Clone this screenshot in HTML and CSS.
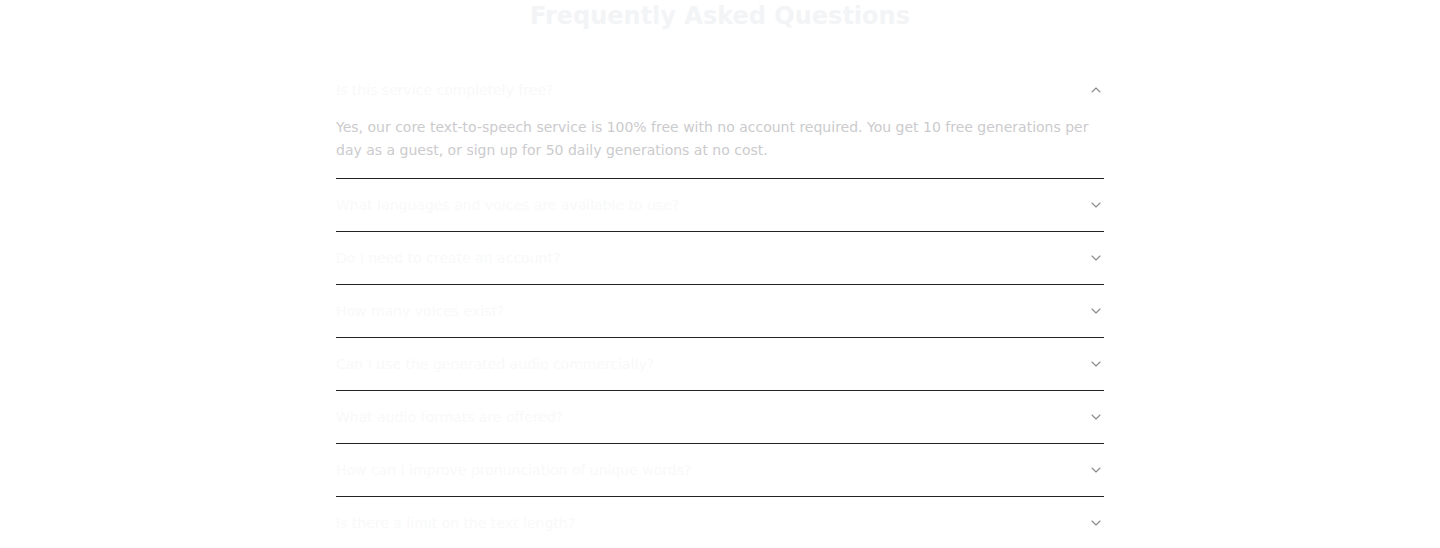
FILE: index.html
```html
<!DOCTYPE html>
<html lang="en">
<head>
  <meta charset="UTF-8" />
  <meta name="viewport" content="width=device-width, initial-scale=1.0" />
  <title>FAQ</title>
  <link rel="stylesheet" href="styles.css">
</head>
<body>

  <section class="faq">
    <h2 class="faq-title">Frequently Asked Questions</h2>

    <div class="faq-list">
      <!-- open item -->
      <div class="faq-item open">
        <button class="faq-q">
          <span>Is this service completely free?</span>
          <svg class="chev" viewBox="0 0 24 24"><path d="M6 15l6-6 6 6" /></svg>
        </button>
        <div class="faq-a">Yes, our core text-to-speech service is 100% free with no account required. You get 10 free generations per day as a guest, or sign up for 50 daily generations at no cost.</div>
      </div>

      <div class="faq-item">
        <button class="faq-q">
          <span>What languages and voices are available to use?</span>
          <svg class="chev" viewBox="0 0 24 24"><path d="M6 9l6 6 6-6" /></svg>
        </button>
      </div>

      <div class="faq-item">
        <button class="faq-q">
          <span>Do I need to create an account?</span>
          <svg class="chev" viewBox="0 0 24 24"><path d="M6 9l6 6 6-6" /></svg>
        </button>
      </div>

      <div class="faq-item">
        <button class="faq-q">
          <span>How many voices exist?</span>
          <svg class="chev" viewBox="0 0 24 24"><path d="M6 9l6 6 6-6" /></svg>
        </button>
      </div>

      <div class="faq-item">
        <button class="faq-q">
          <span>Can I use the generated audio commercially?</span>
          <svg class="chev" viewBox="0 0 24 24"><path d="M6 9l6 6 6-6" /></svg>
        </button>
      </div>

      <div class="faq-item">
        <button class="faq-q">
          <span>What audio formats are offered?</span>
          <svg class="chev" viewBox="0 0 24 24"><path d="M6 9l6 6 6-6" /></svg>
        </button>
      </div>

      <div class="faq-item">
        <button class="faq-q">
          <span>How can I improve pronunciation of unique words?</span>
          <svg class="chev" viewBox="0 0 24 24"><path d="M6 9l6 6 6-6" /></svg>
        </button>
      </div>

      <div class="faq-item">
        <button class="faq-q">
          <span>Is there a limit on the text length?</span>
          <svg class="chev" viewBox="0 0 24 24"><path d="M6 9l6 6 6-6" /></svg>
        </button>
      </div>
    </div>
  </section>

</body>
</html>
```

FILE: styles.css
```css
body {
  margin: 0;
  font-family: "DejaVu Sans", sans-serif;
  background: #fff;
}

.faq {
  max-width: 768px;
  margin: 0 auto;
}

.faq-title {
  margin: 0 0 32px;
  font-size: 24px;
  line-height: 32px;
  text-align: center;
  color: #f3f4f6;
}

/* Accordion */
.faq-item {
  border-bottom: 1px solid #222;
}

.faq-q {
  display: flex;
  width: 100%;
  align-items: center;
  justify-content: space-between;
  padding: 16px 0;
  border: none;
  background: none;
  font-family: inherit;
  font-size: 14px;
  line-height: 20px;
  color: #f9f9fa;
  text-align: left;
  cursor: pointer;
}

.chev {
  width: 16px;
  height: 16px;
  fill: none;
  stroke: #8a8a8a;
  stroke-width: 1.6;
  stroke-linecap: round;
  stroke-linejoin: round;
}

.faq-a {
  padding-bottom: 16px;
  font-size: 14px;
  line-height: 23px;
  color: #cbcbcd;
}
```
